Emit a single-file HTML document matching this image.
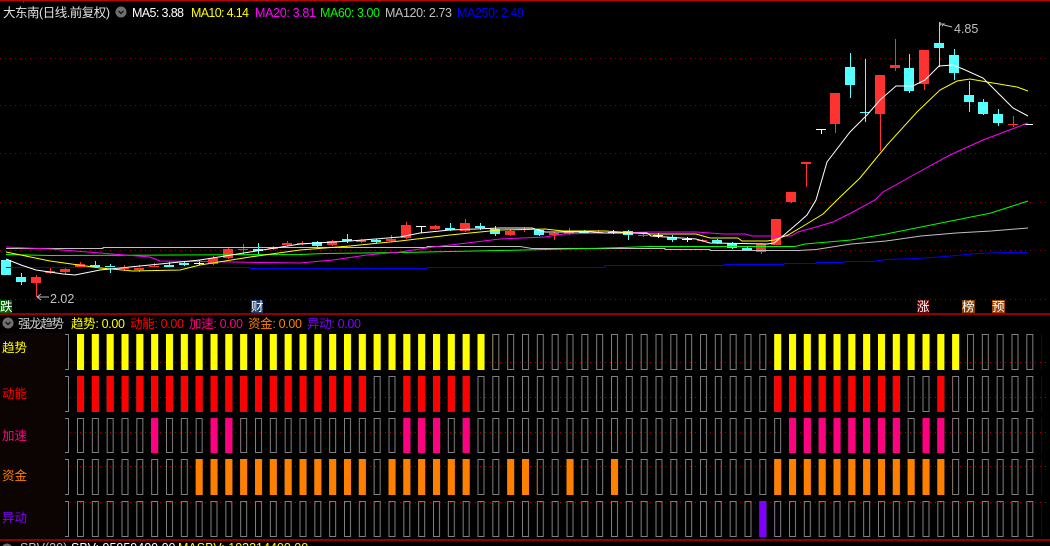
<!DOCTYPE html>
<html><head><meta charset="utf-8"><style>
html,body{margin:0;padding:0;background:#000;overflow:hidden}
svg{display:block}
text{font-family:"Liberation Sans","Noto Sans CJK SC",sans-serif;font-size:12.5px}
</style></head><body>
<svg width="1050" height="546" viewBox="0 0 1050 546" xmlns="http://www.w3.org/2000/svg">
<defs>
<pattern id="o0" patternUnits="userSpaceOnUse" x="77" y="334" width="14.8333" height="36"><rect x="0.5" y="0.5" width="6" height="35" fill="none" stroke="#808080"/></pattern>
<pattern id="o1" patternUnits="userSpaceOnUse" x="77" y="376" width="14.8333" height="36"><rect x="0.5" y="0.5" width="6" height="35" fill="none" stroke="#808080"/></pattern>
<pattern id="o2" patternUnits="userSpaceOnUse" x="77" y="418" width="14.8333" height="35"><rect x="0.5" y="0.5" width="6" height="34" fill="none" stroke="#808080"/></pattern>
<pattern id="o3" patternUnits="userSpaceOnUse" x="77" y="459" width="14.8333" height="36"><rect x="0.5" y="0.5" width="6" height="35" fill="none" stroke="#808080"/></pattern>
<pattern id="o4" patternUnits="userSpaceOnUse" x="77" y="501" width="14.8333" height="36"><rect x="0.5" y="0.5" width="6" height="35" fill="none" stroke="#808080"/></pattern>
<pattern id="pY" patternUnits="userSpaceOnUse" x="77" y="0" width="14.8333" height="600"><rect x="0" y="0" width="7" height="600" fill="#ffff00"/></pattern>
<pattern id="pR" patternUnits="userSpaceOnUse" x="77" y="0" width="14.8333" height="600"><rect x="0" y="0" width="7" height="600" fill="#ff0000"/></pattern>
<pattern id="pP" patternUnits="userSpaceOnUse" x="77" y="0" width="14.8333" height="600"><rect x="0" y="0" width="7" height="600" fill="#ff0080"/></pattern>
<pattern id="pO" patternUnits="userSpaceOnUse" x="77" y="0" width="14.8333" height="600"><rect x="0" y="0" width="7" height="600" fill="#ff8000"/></pattern>
<pattern id="pV" patternUnits="userSpaceOnUse" x="77" y="0" width="14.8333" height="600"><rect x="0" y="0" width="7" height="600" fill="#8000ff"/></pattern>
</defs>

<!-- top border -->
<line x1="0" y1="0.5" x2="1050" y2="0.5" stroke="#c00000"/>
<line x1="23.5" y1="0" x2="23.5" y2="3" stroke="#c00000"/>

<!-- main grid dotted -->
<g stroke="#900000" stroke-dasharray="1 4">
<line x1="0" y1="58.5" x2="1050" y2="58.5"/>
<line x1="0" y1="105.5" x2="1050" y2="105.5"/>
<line x1="0" y1="153.5" x2="1050" y2="153.5"/>
<line x1="0" y1="202.5" x2="1050" y2="202.5"/>
<line x1="0" y1="250.5" x2="1050" y2="250.5"/>
<line x1="0" y1="299.5" x2="1050" y2="299.5"/>
</g>

<!-- header -->
<text x="3" y="17" fill="#e0e0e0" textLength="107">大东南(日线.前复权)</text>
<circle cx="121" cy="12" r="5.5" fill="#707070"/>
<path d="M118.5 11l2.5 2.5 2.5-2.5" stroke="#111" stroke-width="1.3" fill="none"/>
<text x="132" y="17" fill="#ffffff" textLength="52">MA5: 3.88</text>
<text x="191" y="17" fill="#ffff00" textLength="58">MA10: 4.14</text>
<text x="255" y="17" fill="#ff00ff" textLength="61">MA20: 3.81</text>
<text x="320" y="17" fill="#00ff00" textLength="60">MA60: 3.00</text>
<text x="385" y="17" fill="#c0c0c0" textLength="67">MA120: 2.73</text>
<text x="457" y="17" fill="#0000ff" textLength="67">MA250: 2.49</text>

<!-- candles -->
<g fill="#ff3232">
<rect x="36" y="275" width="1" height="22"/><rect x="31" y="277" width="10" height="6"/>
<rect x="50" y="268" width="1" height="6"/><rect x="45" y="271" width="10" height="2"/>
<rect x="65" y="268" width="1" height="6"/><rect x="60" y="269" width="10" height="3"/>
<rect x="80" y="262" width="1" height="6"/><rect x="75" y="264" width="10" height="3"/>
<rect x="124" y="265" width="1" height="6"/><rect x="119" y="267" width="10" height="2"/>
<rect x="139" y="265" width="1" height="7"/><rect x="134" y="268" width="10" height="2"/>
<rect x="154" y="263" width="1" height="5"/><rect x="149" y="266" width="10" height="2"/>
<rect x="213" y="256" width="1" height="9"/><rect x="208" y="258" width="10" height="6"/>
<rect x="228" y="247" width="1" height="12"/><rect x="223" y="249" width="10" height="9"/>
<rect x="243" y="244" width="1" height="10"/><rect x="238" y="249" width="10" height="1"/>
<rect x="273" y="246" width="1" height="4"/><rect x="268" y="247" width="10" height="2"/>
<rect x="287" y="241" width="1" height="5"/><rect x="282" y="243" width="10" height="2"/>
<rect x="302" y="241" width="1" height="4"/><rect x="297" y="243" width="10" height="1"/>
<rect x="332" y="240" width="1" height="6"/><rect x="327" y="241" width="10" height="4"/>
<rect x="361" y="239" width="1" height="4"/><rect x="356" y="240" width="10" height="2"/>
<rect x="391" y="235" width="1" height="7"/><rect x="386" y="239" width="10" height="2"/>
<rect x="406" y="222" width="1" height="17"/><rect x="401" y="225" width="10" height="13"/>
<rect x="435" y="225" width="1" height="5"/><rect x="430" y="226" width="10" height="3"/>
<rect x="465" y="219" width="1" height="13"/><rect x="460" y="223" width="10" height="8"/>
<rect x="510" y="229" width="1" height="7"/><rect x="505" y="231" width="10" height="4"/>
<rect x="524" y="227" width="1" height="5"/><rect x="519" y="229" width="10" height="1"/>
<rect x="554" y="232" width="1" height="8"/><rect x="549" y="233" width="10" height="2"/>
<rect x="569" y="228" width="1" height="7"/><rect x="564" y="231" width="10" height="3"/>
<rect x="598" y="230" width="1" height="4"/><rect x="593" y="232" width="10" height="1"/>
<rect x="643" y="233" width="1" height="4"/><rect x="638" y="235" width="10" height="1"/>
<rect x="702" y="239" width="1" height="3"/><rect x="697" y="240" width="10" height="1"/>
<rect x="761" y="243" width="1" height="11"/><rect x="756" y="244" width="10" height="8"/>
<rect x="771" y="219" width="10" height="26"/>
<rect x="791" y="192" width="1" height="11"/><rect x="786" y="192" width="10" height="10"/>
<rect x="806" y="162" width="1" height="25"/><rect x="801" y="162" width="10" height="2"/>
<rect x="835" y="93" width="1" height="40"/><rect x="830" y="93" width="10" height="31"/>
<rect x="880" y="75" width="1" height="76"/><rect x="875" y="75" width="10" height="39"/>
<rect x="895" y="39" width="1" height="32"/><rect x="890" y="65" width="10" height="3"/>
<rect x="924" y="50" width="1" height="40"/><rect x="919" y="50" width="10" height="34"/>
<rect x="1013" y="116" width="1" height="11"/><rect x="1008" y="124" width="10" height="1"/>
</g>
<g fill="#54ffff">
<rect x="1" y="260" width="10" height="15"/>
<rect x="21" y="273" width="1" height="12"/><rect x="16" y="277" width="10" height="5"/>
<rect x="95" y="261" width="1" height="7"/><rect x="90" y="265" width="10" height="2"/>
<rect x="110" y="264" width="1" height="9"/><rect x="105" y="266" width="10" height="2"/>
<rect x="169" y="262" width="1" height="6"/><rect x="164" y="265" width="10" height="2"/>
<rect x="184" y="261" width="1" height="5"/><rect x="179" y="263" width="10" height="2"/>
<rect x="258" y="243" width="1" height="11"/><rect x="253" y="249" width="10" height="2"/>
<rect x="317" y="241" width="1" height="6"/><rect x="312" y="242" width="10" height="4"/>
<rect x="347" y="234" width="1" height="9"/><rect x="342" y="239" width="10" height="2"/>
<rect x="376" y="239" width="1" height="4"/><rect x="371" y="240" width="10" height="2"/>
<rect x="450" y="223" width="1" height="8"/><rect x="445" y="228" width="10" height="2"/>
<rect x="480" y="223" width="1" height="7"/><rect x="475" y="226" width="10" height="2"/>
<rect x="495" y="226" width="1" height="10"/><rect x="490" y="229" width="10" height="5"/>
<rect x="539" y="229" width="1" height="7"/><rect x="534" y="230" width="10" height="5"/>
<rect x="584" y="230" width="1" height="4"/><rect x="579" y="231" width="10" height="2"/>
<rect x="628" y="230" width="1" height="10"/><rect x="623" y="231" width="10" height="4"/>
<rect x="672" y="235" width="1" height="7"/><rect x="667" y="237" width="10" height="3"/>
<rect x="717" y="239" width="1" height="5"/><rect x="712" y="240" width="10" height="3"/>
<rect x="732" y="242" width="1" height="7"/><rect x="727" y="243" width="10" height="5"/>
<rect x="747" y="246" width="1" height="5"/><rect x="742" y="248" width="10" height="2"/>
<rect x="850" y="53" width="1" height="45"/><rect x="845" y="67" width="10" height="18"/>
<rect x="865" y="59" width="1" height="63"/><rect x="860" y="112" width="10" height="1"/>
<rect x="909" y="54" width="1" height="39"/><rect x="904" y="68" width="10" height="23"/>
<rect x="939" y="22" width="1" height="45"/><rect x="934" y="43" width="10" height="5"/>
<rect x="954" y="49" width="1" height="31"/><rect x="949" y="55" width="10" height="18"/>
<rect x="969" y="81" width="1" height="31"/><rect x="964" y="95" width="10" height="7"/>
<rect x="983" y="99" width="1" height="16"/><rect x="978" y="102" width="10" height="12"/>
<rect x="998" y="109" width="1" height="17"/><rect x="993" y="114" width="10" height="9"/>
</g>
<g fill="#ffffff">
<rect x="199" y="260" width="1" height="5"/><rect x="194" y="263" width="10" height="1"/>
<rect x="421" y="226" width="1" height="7"/><rect x="416" y="226" width="10" height="1"/>
<rect x="613" y="230" width="1" height="4"/><rect x="608" y="232" width="10" height="1"/>
<rect x="658" y="233" width="1" height="5"/><rect x="653" y="235" width="10" height="1"/>
<rect x="687" y="237" width="1" height="5"/><rect x="682" y="239" width="10" height="1"/>
<rect x="821" y="129" width="1" height="5"/><rect x="816" y="129" width="10" height="1"/>
<rect x="1023" y="124" width="10" height="1"/>
</g>

<!-- MA lines -->
<g fill="none" stroke-width="1">
<polyline stroke="#0000ff" points="6,267.5 250,267.5 250,268.5 427,268.5 427,267.5 605,267.5 605,265.5 724,265.5 724,264.5 784,264.5 784,263.5 816,263.5 816,262.5 844,262.5 844,261.5 872,261.5 886,259.5 917,258.5 945,256.5 977,253.5 1005,252.5 1028,252.5"/>
<polyline stroke="#c0c0c0" points="6,248.5 103,248.5 103,247.5 427,247.5 427,246.5 520,246.5 532,248.5 665,248.5 665,249.5 710,249.5 710,250.5 798,250.5 816,249.5 851,244 886,241 921,236 956,233 991,231 1028,228"/>
<polyline stroke="#00ff00" points="6,254.5 50,255.5 300,254.5 325,253.5 400,252.5 500,250.5 545,249.5 591,248.5 649,246.5 795,246.5 805,244 851,240 886,234 921,227 956,220 991,213 1028,201"/>
<polyline stroke="#ff00ff" points="6,247 50,249 100,253 150,257 160,261 233,262 300,263 333,260 367,255 400,252 433,247 467,243 500,239 545,237 563,234 605,233 651,232 696,232 724,234 745,234 752,236 791,236 798,232 816,227 833,222 851,213 875,200 883,192 917,173 950,155 983,140 1028,123"/>
<polyline stroke="#ffff00" points="6,252 50,261 100,268 133,271 180,270 200,265 250,257 300,250 350,246 400,241 450,235 500,230 545,229 563,231 605,231 651,234 696,234 710,238 738,238 742,241 767,241 774,240 788,235 805,225 823,214 837,200 860,178 887,145 917,112 940,90 957,81 970,79 993,83 1017,87 1028,91"/>
<polyline stroke="#ffffff" points="6,259 21,265 36,270 63,274 75,275 100,270 150,265 200,260 250,252 300,244 350,241 400,237 420,233 450,230 500,228 532,228 545,232 591,232 605,233 647,233 651,236 696,239 710,243 767,244 774,243 784,235 798,223 807,215 816,200 827,162 850,132 867,115 880,100 896,86 913,86 925,80 939,66 953,65 963,69 983,78 1000,95 1013,108 1028,116"/>
</g>

<!-- high/low labels -->
<path d="M940 24h4l-2 2 M940 22v4" stroke="#c0c0c0" fill="none"/>
<line x1="944" y1="25" x2="952" y2="27" stroke="#c0c0c0"/>
<text x="954" y="33" fill="#c0c0c0" font-size="12">4.85</text>
<path d="M37 297h12 M37 297l4-3 M37 297l4 3" stroke="#c0c0c0" fill="none"/>
<text x="50" y="303" fill="#c0c0c0" font-size="12">2.02</text>

<!-- flag labels -->
<rect x="0" y="300" width="12" height="13" fill="#006000"/>
<text x="0" y="311" fill="#ffffff" font-size="12">跌</text>
<rect x="251" y="300" width="12" height="13" fill="#1a3a6a"/>
<text x="251" y="311" fill="#ffffff" font-size="12">财</text>
<rect x="917" y="300" width="12" height="13" fill="#6a0000"/>
<text x="917" y="311" fill="#ffffff" font-size="12">涨</text>
<rect x="962" y="300" width="13" height="13" fill="#804000"/>
<text x="962" y="311" fill="#ffffff" font-size="12">榜</text>
<rect x="992" y="300" width="13" height="13" fill="#a04000"/>
<text x="992" y="311" fill="#ffffff" font-size="12">预</text>

<!-- separator -->
<line x1="0" y1="314" x2="1050" y2="314" stroke="#c00000" stroke-width="1.5"/>

<!-- indicator header -->
<circle cx="8" cy="323" r="5.5" fill="#707070"/>
<path d="M5.5 322l2.5 2.5 2.5-2.5" stroke="#111" stroke-width="1.3" fill="none"/>
<text x="18" y="328" fill="#d0d0d0" textLength="46">强龙趋势</text>
<text x="71" y="328" fill="#ffff00" textLength="54">趋势: 0.00</text>
<text x="130" y="328" fill="#ff0000" textLength="54">动能: 0.00</text>
<text x="189" y="328" fill="#ff0080" textLength="54">加速: 0.00</text>
<text x="248" y="328" fill="#ff8000" textLength="54">资金: 0.00</text>
<text x="307" y="328" fill="#8000ff" textLength="54">异动: 0.00</text>

<!-- left panel -->
<rect x="0" y="333" width="66" height="207" fill="#0c0303"/>
<text x="2" y="352" fill="#ffff00" font-size="12">趋势</text>
<text x="2" y="398" fill="#ff0000" font-size="12">动能</text>
<text x="2" y="440" fill="#ff0080" font-size="12">加速</text>
<text x="2" y="480" fill="#ff8000" font-size="12">资金</text>
<text x="2" y="522" fill="#8000ff" font-size="12">异动</text>
<g stroke="#808080" fill="none">
<path d="M65 334.5h3.5v35h-3.5"/>
<path d="M65 376.5h3.5v35h-3.5"/>
<path d="M65 418.5h3.5v34h-3.5"/>
<path d="M65 459.5h3.5v35h-3.5"/>
<path d="M65 501.5h3.5v35h-3.5"/>
</g>
<g stroke="#a00000" stroke-dasharray="1 4">
<line x1="70" y1="362.5" x2="1050" y2="362.5"/>
<line x1="70" y1="397.5" x2="1050" y2="397.5"/>
<line x1="70" y1="432.5" x2="1050" y2="432.5"/>
<line x1="70" y1="466.5" x2="1050" y2="466.5"/>
<line x1="70" y1="502.5" x2="1050" y2="502.5"/>
</g>

<!-- outline bars -->
<rect x="77" y="334" width="964.2" height="36" fill="url(#o0)"/>
<rect x="77" y="376" width="964.2" height="36" fill="url(#o1)"/>
<rect x="77" y="418" width="964.2" height="35" fill="url(#o2)"/>
<rect x="77" y="459" width="964.2" height="36" fill="url(#o3)"/>
<rect x="77" y="501" width="964.2" height="36" fill="url(#o4)"/>

<!-- filled bars: x=77+k*14.8333, w=n*14.8333 -->
<g>
<rect x="77" y="334" width="415.33" height="36" fill="url(#pY)"/>
<rect x="774.17" y="334" width="192.83" height="36" fill="url(#pY)"/>

<rect x="77" y="376" width="296.67" height="36" fill="url(#pR)"/>
<rect x="403.33" y="376" width="74.17" height="36" fill="url(#pR)"/>
<rect x="774.17" y="376" width="133.5" height="36" fill="url(#pR)"/>
<rect x="937.33" y="376" width="14.83" height="36" fill="url(#pR)"/>

<rect x="151.17" y="418" width="14.83" height="35" fill="url(#pP)"/>
<rect x="210.5" y="418" width="29.67" height="35" fill="url(#pP)"/>
<rect x="403.33" y="418" width="44.5" height="35" fill="url(#pP)"/>
<rect x="462.67" y="418" width="14.83" height="35" fill="url(#pP)"/>
<rect x="789" y="418" width="118.67" height="35" fill="url(#pP)"/>
<rect x="922.5" y="418" width="29.67" height="35" fill="url(#pP)"/>

<rect x="195.67" y="459" width="178" height="36" fill="url(#pO)"/>
<rect x="388.5" y="459" width="89" height="36" fill="url(#pO)"/>
<rect x="507.17" y="459" width="29.67" height="36" fill="url(#pO)"/>
<rect x="566.5" y="459" width="14.83" height="36" fill="url(#pO)"/>
<rect x="611" y="459" width="14.83" height="36" fill="url(#pO)"/>
<rect x="774.17" y="459" width="178" height="36" fill="url(#pO)"/>

<rect x="759.33" y="501" width="14.83" height="36" fill="url(#pV)"/>
</g>

<!-- bottom -->
<line x1="0" y1="540" x2="1050" y2="540" stroke="#c00000" stroke-width="1.5"/>
<circle cx="7" cy="549" r="5.5" fill="#707070"/>
<text x="20" y="552" fill="#c0c0c0" font-size="12">SBV(20)</text>
<text x="71" y="552" fill="#ffffff" font-size="12">SBV: 95959400.00</text>
<text x="178" y="552" fill="#ffff00" font-size="12">MASBV: 103214400.00</text>
</svg>
</body></html>
